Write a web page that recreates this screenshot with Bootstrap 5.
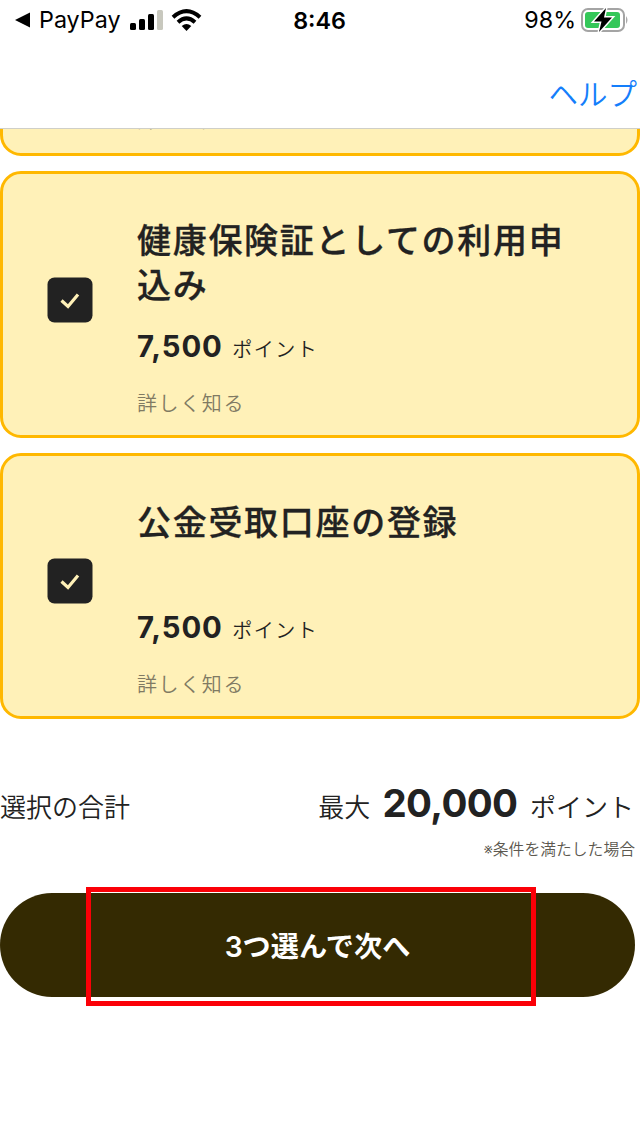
<!DOCTYPE html>
<html lang="ja">
<head>
<meta charset="utf-8">
<meta name="viewport" content="width=device-width, initial-scale=1">
<title>ポイント申込み</title>
<link href="https://cdn.jsdelivr.net/npm/bootstrap@5.3.0/dist/css/bootstrap.min.css" rel="stylesheet">
<style>
body{font-family:Inter,"Noto Sans CJK JP",sans-serif;color:#222;background:#fff;height:1136px;overflow:hidden}
.status{height:40px;color:#000;font-size:23.3px;line-height:42px;padding:0 11px 0 14px}
.status>div{flex:1 1 0}
.status svg{margin-top:-1px}
.clock{font-weight:600;padding-right:4px}
.topnav{height:89px;border-bottom:1px solid #cfcfc8;padding:18px 3px 0 0}
.help{color:#147efb;font-size:29.5px;line-height:72px;font-weight:350}
.choices{height:590px;gap:15px}
.choice{height:266.5px;border:3px solid #ffb800;border-radius:21px;background:#fff1b8;padding:44px 45px 0 44px}
.choice-end{height:67px;padding:0 0 0 134px}
.choice-end .more{margin-top:14px}
.tick{width:46px;height:46px;margin-top:58.5px;margin-right:44px}
.choice h2{font-size:34px;line-height:45px;height:90px;font-weight:500;letter-spacing:1.7px;-webkit-text-stroke:.3px #222}
.price{line-height:40px;margin-top:18.5px}
.price strong{font-size:29.3px;font-weight:700;letter-spacing:.9px;margin-right:5px}
.price span{font-size:20px;font-weight:350;letter-spacing:1.5px}
.more{font-size:20px;line-height:30px;margin-top:18px;letter-spacing:1.6px;font-weight:350;color:#807a63}
.total{padding-right:6px;margin-top:54px;height:60px;font-size:26px;line-height:60px;font-weight:350}
.total strong{font-size:38.5px;font-weight:700;letter-spacing:-.6px;margin:0 12.5px 0 12px}
.note{font-size:15.8px;line-height:24px;padding-right:5px;margin-top:5px;color:#5c584f;font-weight:350}
.go{width:635px;height:104px;margin-top:31px;border-radius:53px;background:#342a02;color:#fff;font-size:28.2px;font-weight:600}
.go span{position:relative;top:2px}
.frame{left:86px;top:-6px;width:450px;height:119px;border:5px solid #fb0007;pointer-events:none}
</style>
</head>
<body>
<header>
  <div class="status d-flex">
    <div class="d-flex align-items-center">
      <svg width="17" height="16" viewBox="0 0 17 16"><path d="M16 .5v15L1 8z"/></svg>
      <span class="ms-2">PayPay</span>
      <svg class="ms-2" width="34" height="22" viewBox="0 0 34 22"><rect x="1" y="14" width="6" height="7" rx="1.5"/><rect x="10" y="10" width="6" height="11" rx="1.5"/><rect x="19" y="5" width="6" height="16" rx="1.5"/><rect x="28" y="1" width="6" height="20" rx="1.5" fill="#c8c8be"/></svg>
      <svg class="ms-2" width="31" height="22" viewBox="0 0 31 22" fill="none" stroke="#000" stroke-width="4"><path d="M2 8.2Q15.5-3.9 29 8.2M7 13.3Q15.5 5.6 24 13.3"/><path d="M10.7 17Q15.5 13 20.3 17L15.5 22z" fill="#000" stroke="none"/></svg>
    </div>
    <div class="clock text-center">8:46</div>
    <div class="d-flex align-items-center justify-content-end">
      <span>98%</span>
      <svg class="ms-1" width="49" height="26" viewBox="0 0 49 26"><rect x="2" y="2" width="42" height="22" rx="6" fill="#fff" stroke="#a4a4a4" stroke-width="2"/><rect x="5" y="5" width="35" height="16" rx="3" fill="#34c759"/><path d="M46 9q3 4 0 8z" fill="#aaa"/><path d="M26 1 14 14.5h7.5L19 25l13-14.5h-8z" stroke="#fff" stroke-width="3" paint-order="stroke"/></svg>
    </div>
  </div>
  <nav class="topnav text-end"><a class="help text-decoration-none d-block" href="#">ヘルプ</a></nav>
</header>
<main>
  <section class="choices overflow-hidden d-flex flex-column justify-content-end">
    <article class="choice choice-end flex-shrink-0"><div class="more">詳しく知る</div></article>
    <article class="choice d-flex flex-shrink-0">
      <svg class="tick flex-shrink-0" viewBox="0 0 46 46"><rect x=".5" y=".5" width="45" height="45" rx="7" fill="#222"/><path d="m14.5 23.5 6.5 6L31 17.5" fill="none" stroke="#fff1b8" stroke-width="3.2"/></svg>
      <div><h2 class="mb-0">健康保険証としての利用申込み</h2><div class="price"><strong>7,500</strong> <span>ポイント</span></div><div class="more">詳しく知る</div></div>
    </article>
    <article class="choice d-flex flex-shrink-0">
      <svg class="tick flex-shrink-0" viewBox="0 0 46 46"><rect x=".5" y=".5" width="45" height="45" rx="7" fill="#222"/><path d="m14.5 23.5 6.5 6L31 17.5" fill="none" stroke="#fff1b8" stroke-width="3.2"/></svg>
      <div><h2 class="mb-0">公金受取口座の登録</h2><div class="price"><strong>7,500</strong> <span>ポイント</span></div><div class="more">詳しく知る</div></div>
    </article>
  </section>
  <div class="total d-flex justify-content-between align-items-baseline"><span>選択の合計</span><div class="d-flex align-items-baseline"><span>最大</span><strong>20,000</strong><span>ポイント</span></div></div>
  <div class="note text-end">※条件を満たした場合</div>
  <div class="position-relative">
    <button class="go d-block border-0 p-0" type="button"><span>3つ選んで次へ</span></button>
    <div class="frame position-absolute"></div>
  </div>
</main>
<script src="https://cdn.jsdelivr.net/npm/bootstrap@5.3.0/dist/js/bootstrap.bundle.min.js"></script>
</body>
</html>
